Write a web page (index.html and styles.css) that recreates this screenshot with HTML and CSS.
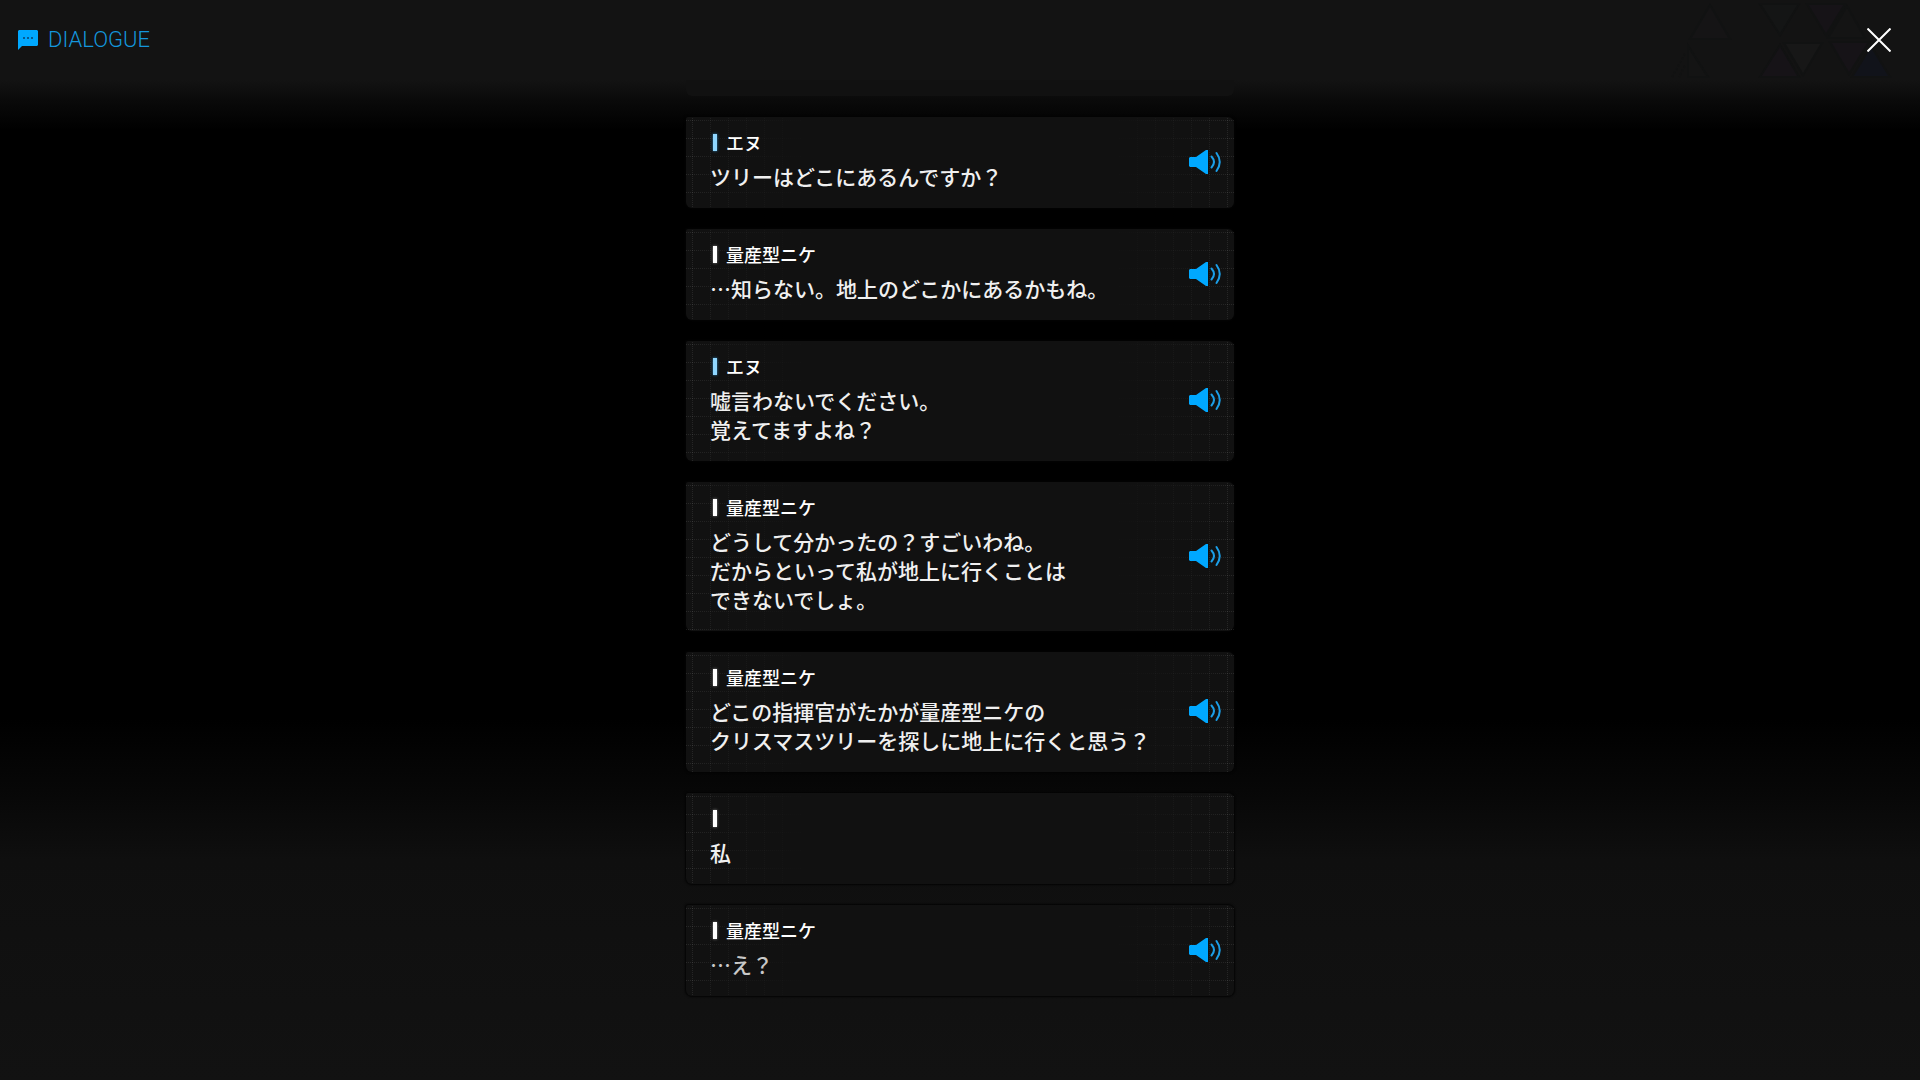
FILE: index.html
```html
<!DOCTYPE html>
<html lang="ja">
<head>
<meta charset="utf-8">
<meta name="viewport" content="width=device-width, initial-scale=1">
<title>DIALOGUE</title>
<link rel="stylesheet" href="styles.css">
</head>
<body>
<svg class="defs" width="0" height="0" aria-hidden="true">
  <symbol id="speaker" viewBox="0 0 32 24">
    <path fill="#00a8ff" d="M0 8 L1 7 H7 L17 0 H19 V24 H17 L7 17 H1 L0 16 Z"/>
    <path fill="none" stroke="#1b9fe8" stroke-width="2" stroke-linecap="round" d="M22.500 6.500 Q27.500 12 22.500 17.500 M27.500 3 Q34 12 27.500 21"/>
  </symbol>
</svg>
<div class="screen">
  <header class="topbar">
    <h1 class="title">
      <svg class="title-icon" viewBox="0 0 20 20" aria-hidden="true">
        <path fill="#00a8ff" d="M1 0 H19 L20 1 V15 L19 16 H4 L0 20 V1 Z"/>
        <path fill="#075a91" d="M5 7h2v2h-2z M9 7h2v2h-2z M13 7h2v2h-2z"/>
      </svg>
      <span>DIALOGUE</span>
    </h1>
    <svg class="triangles" viewBox="0 0 240 80" aria-hidden="true">
      <g stroke="#111212" stroke-width="2">
        <path fill="#151415" d="M35 5 L15 39 H55 Z"/>
        <path fill="#141515" d="M85 4 H124 L105 35 Z"/>
        <path fill="#161317" d="M132 4 H170 L151 35 Z"/>
        <path fill="#141414" d="M172 6 L153 38 H190 Z"/>
        <path fill="#171717" d="M109 43 H147 L128 75 Z"/>
        <path fill="#161317" d="M105 45 L85 77 H124 Z"/>
        <path fill="#161317" d="M155 42 H194 L174 74 Z"/>
        <path fill="#11131a" d="M196 46 L177 77 H215 Z"/>
        <path fill="#141414" d="M13 46 V77 H33 Z"/>
        <path fill="none" stroke-dasharray="2 2" d="M10 54 L-3 77 M10 66 L4 77"/>
      </g>
    </svg>
    <button class="close" type="button" aria-label="閉じる">
      <svg viewBox="0 0 24 24" aria-hidden="true"><path fill="none" stroke="#fff" stroke-width="2" d="M.5 .5 L23.500 23.500 M23.500 .5 L.5 23.500"/></svg>
    </button>
  </header>

  <main class="log">
    <article class="card">
      <div class="body"><h2 class="name guest">エヌ</h2><p class="line">ツリーはどこにあるんですか？</p></div>
      <button class="voice" type="button" aria-label="音声を再生"><svg><use href="#speaker"/></svg></button>
    </article>
    <article class="card">
      <div class="body"><h2 class="name">量産型ニケ</h2><p class="line">…知らない。地上のどこかにあるかもね。</p></div>
      <button class="voice" type="button" aria-label="音声を再生"><svg><use href="#speaker"/></svg></button>
    </article>
    <article class="card">
      <div class="body"><h2 class="name guest">エヌ</h2><p class="line">嘘言わないでください。<br>覚えてますよね？</p></div>
      <button class="voice" type="button" aria-label="音声を再生"><svg><use href="#speaker"/></svg></button>
    </article>
    <article class="card">
      <div class="body"><h2 class="name">量産型ニケ</h2><p class="line">どうして分かったの？すごいわね。<br>だからといって私が地上に行くことは<br>できないでしょ。</p></div>
      <button class="voice" type="button" aria-label="音声を再生"><svg><use href="#speaker"/></svg></button>
    </article>
    <article class="card">
      <div class="body"><h2 class="name">量産型ニケ</h2><p class="line">どこの指揮官がたかが量産型ニケの<br>クリスマスツリーを探しに地上に行くと思う？</p></div>
      <button class="voice" type="button" aria-label="音声を再生"><svg><use href="#speaker"/></svg></button>
    </article>
    <article class="card">
      <div class="body"><h2 class="name"></h2><p class="line">私</p></div>
    </article>
    <article class="card">
      <div class="body"><h2 class="name">量産型ニケ</h2><p class="line fading">…え？</p></div>
      <button class="voice" type="button" aria-label="音声を再生"><svg><use href="#speaker"/></svg></button>
    </article>
  </main>
</div>
</body>
</html>
```
FILE: styles.css
```css
* { box-sizing: border-box; }

body {
  margin: 0;
  background: #000;
  color: #fff;
  font-family: "Noto Sans CJK JP", sans-serif;
}

.defs { position: absolute; }

.screen {
  display: flex;
  flex-direction: column;
  min-height: 100vh;
  background:
    linear-gradient(to bottom, #131313 80px, #0a0a0a 100px, transparent 130px),
    linear-gradient(to top, #121212 0, #0f0f0f 220px, #070707 290px, transparent 360px);
}

.topbar {
  display: flex;
  align-items: center;
  height: 80px;
  padding: 0 29px 0 18px;
}

.title {
  display: flex;
  align-items: center;
  gap: 10px;
  margin: 0;
  color: #1496dc;
  font: 300 22px/24px Roboto, sans-serif;
}

.title-icon { width: 20px; height: 20px; }

.triangles {
  width: 240px;
  height: 80px;
  margin-left: auto;
  margin-right: -48px;
  overflow: visible;
}

.close,
.voice {
  display: flex;
  flex: none;
  padding: 0;
  border: 0;
  background: none;
  cursor: pointer;
}

.close { position: relative; }
.close svg { width: 24px; height: 24px; }

.log {
  display: flex;
  flex-direction: column;
  gap: 21px;
  width: 100%;
  max-width: 548px;
  margin: 0 auto;
  padding: 0 0 83px;
}

/* Tail of the entry that has scrolled under the header */
.log::before {
  content: "";
  height: 16px;
  border-radius: 0 0 6px 6px;
  background: #111;
}

.card {
  position: relative;
  display: flex;
  align-items: center;
  justify-content: space-between;
  padding: 15px 13px 17px 24px;
  border-radius: 2px 6px 6px 6px;
  background: #111;
  box-shadow: 0 0 2px 1px #040404;
}

.card::before,
.card::after {
  content: "";
  position: absolute;
  top: 0;
  bottom: 0;
  width: 126px;
  background-image: url("data:image/svg+xml,%3Csvg xmlns='http://www.w3.org/2000/svg' width='18' height='18'%3E%3Cpath d='M.5 0V18M0 .5H18' fill='none' stroke='%23fff' stroke-opacity='.1' stroke-dasharray='1 1'/%3E%3C/svg%3E");
}

.card::before {
  left: 0;
  background-position: 6px 3px;
  mask-image: linear-gradient(to right, #000, rgba(0, 0, 0, .4) 40px, transparent);
}

.card::after {
  right: 0;
  background-position: 119px 3px;
  mask-image: linear-gradient(to left, #000, rgba(0, 0, 0, .4) 40px, transparent);
}

.body { position: relative; z-index: 1; }

.voice {
  position: relative;
  z-index: 1;
}

.name {
  display: flex;
  align-items: center;
  gap: 9px;
  height: 20px;
  margin: 0 0 10px 3px;
  font-size: 18px;
  font-weight: 500;
  line-height: 20px;
}

.name::before {
  content: "";
  width: 4px;
  height: 17px;
  background: #fff;
  box-shadow: 0 0 3px rgba(255, 255, 255, .5);
}

.name.guest::before {
  background: #8fd6ff;
  box-shadow: 0 0 3px rgba(60, 180, 255, .7);
}

.line {
  margin: 0;
  color: #f0f0f0;
  font-size: 21px;
  font-weight: 500;
  line-height: 29px;
}

.line.fading { color: #c8c8c8; }

.voice svg { width: 32px; height: 24px; }
```
